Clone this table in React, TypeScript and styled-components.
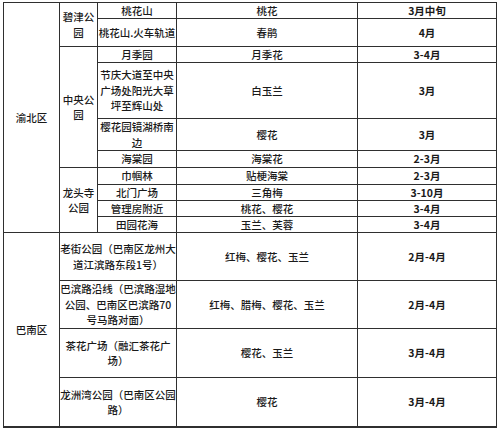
import React from "react";
import styled, { createGlobalStyle } from "styled-components";

const Global = createGlobalStyle`
  html, body { margin: 0; padding: 0; background: #ffffff; }
  body { font-family: "Noto Sans CJK SC", "Noto Sans", sans-serif; color: #151515; }
`;

const Sheet = styled.div`
  display: grid;
  grid-template-columns: 55px 37px 78px 180px 138px;
  grid-template-rows: 15px 27px 15px 55px 31px 16px 16px 15px 15px 15px 47px 47px 48px 48px;
  gap: 1px;
  padding: 1px 1px 2px 1px;
  background: #2f2f2f;
  width: max-content;
  margin: 2px 0 0 3px;
`;

const Cell = styled.div<{ $c: number; $r: number; $cs?: number; $rs?: number; $bold?: boolean }>`
  grid-column: ${(p) => p.$c} / span ${(p) => p.$cs ?? 1};
  grid-row: ${(p) => p.$r} / span ${(p) => p.$rs ?? 1};
  background: #ffffff;
  display: flex;
  align-items: center;
  justify-content: center;
  text-align: center;
  font-size: 10.5px;
  line-height: 15.5px;
  font-weight: ${(p) => (p.$bold ? 700 : 500)};
  color: #1a1a1a;
  white-space: nowrap;
  overflow: visible;
`;

type Row = { spot: string[]; flower: string; time: string };

const yubeiRows: Row[] = [
  { spot: ["桃花山"], flower: "桃花", time: "3月中旬" },
  { spot: ["桃花山.火车轨道"], flower: "春鹃", time: "4月" },
  { spot: ["月季园"], flower: "月季花", time: "3-4月" },
  { spot: ["节庆大道至中央", "广场处阳光大草", "坪至辉山处"], flower: "白玉兰", time: "3月" },
  { spot: ["樱花园镜湖桥南", "边"], flower: "樱花", time: "3月" },
  { spot: ["海棠园"], flower: "海棠花", time: "2-3月" },
  { spot: ["巾帼林"], flower: "贴梗海棠", time: "2-3月" },
  { spot: ["北门广场"], flower: "三角梅", time: "3-10月" },
  { spot: ["管理房附近"], flower: "桃花、樱花", time: "3-4月" },
  { spot: ["田园花海"], flower: "玉兰、芙蓉", time: "3-4月" },
];

const parks = [
  { name: ["碧津公", "园"], start: 1, span: 2 },
  { name: ["中央公", "园"], start: 3, span: 4 },
  { name: ["龙头寺", "公园"], start: 7, span: 4 },
];

const bananRows: Row[] = [
  { spot: ["老街公园（巴南区龙州大", "道江滨路东段1号）"], flower: "红梅、樱花、玉兰", time: "2月-4月" },
  { spot: ["巴滨路沿线（巴滨路湿地", "公园、巴南区巴滨路70", "号马路对面）"], flower: "红梅、腊梅、樱花、玉兰", time: "2月-4月" },
  { spot: ["茶花广场（融汇茶花广", "场）"], flower: "樱花、玉兰", time: "3月-4月" },
  { spot: ["龙洲湾公园（巴南区公园", "路）"], flower: "樱花", time: "3月-4月" },
];

const Lines = ({ lines }: { lines: string[] }) => (
  <span>
    {lines.map((l, i) => (
      <React.Fragment key={i}>
        {i > 0 && <br />}
        {l}
      </React.Fragment>
    ))}
  </span>
);

export default function App() {
  const bStart = yubeiRows.length + 1;
  return (
    <>
      <Global />
      <Sheet>
        <Cell $c={1} $r={1} $rs={yubeiRows.length}>渝北区</Cell>
        {parks.map((p) => (
          <Cell key={p.start} $c={2} $r={p.start} $rs={p.span}>
            <Lines lines={p.name} />
          </Cell>
        ))}
        {yubeiRows.map((row, i) => (
          <React.Fragment key={i}>
            <Cell $c={3} $r={i + 1}>
              <Lines lines={row.spot} />
            </Cell>
            <Cell $c={4} $r={i + 1}>{row.flower}</Cell>
            <Cell $c={5} $r={i + 1} $bold>{row.time}</Cell>
          </React.Fragment>
        ))}
        <Cell $c={1} $r={bStart} $rs={bananRows.length}>巴南区</Cell>
        {bananRows.map((row, i) => (
          <React.Fragment key={i}>
            <Cell $c={2} $cs={2} $r={bStart + i}>
              <Lines lines={row.spot} />
            </Cell>
            <Cell $c={4} $r={bStart + i}>{row.flower}</Cell>
            <Cell $c={5} $r={bStart + i} $bold>{row.time}</Cell>
          </React.Fragment>
        ))}
      </Sheet>
    </>
  );
}
